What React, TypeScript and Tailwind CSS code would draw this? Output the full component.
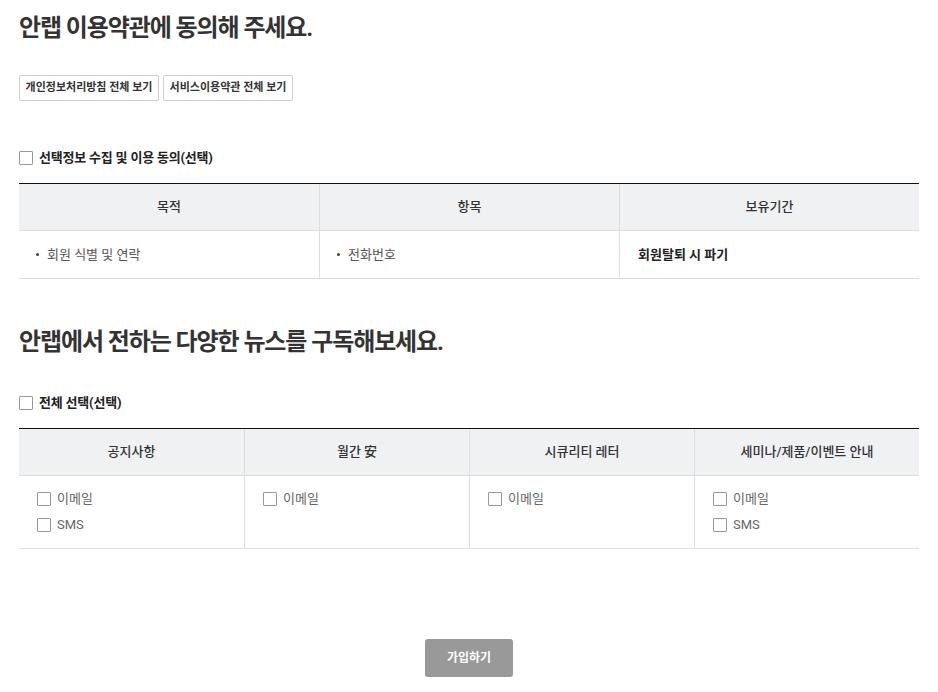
import React from "react";

const font = { fontFamily: 'Roboto, "Noto Sans CJK KR", "Noto Sans", sans-serif' };

function Box() {
  return <span className="inline-block w-[14px] h-[14px] border border-[#999] bg-white rounded-[1px] shrink-0" />;
}

function Check({ label, bold }: { label: string; bold?: boolean }) {
  return (
    <label className="flex items-center gap-[6px] leading-[16px]">
      <Box />
      <span className={bold ? "text-[13px] font-bold text-[#222] tracking-[-0.2px]" : "text-[13px] text-[#666]"}>{label}</span>
    </label>
  );
}

const subs = [
  { title: "공지사항", items: ["이메일", "SMS"] },
  { title: "월간 安", items: ["이메일"] },
  { title: "시큐리티 레터", items: ["이메일"] },
  { title: "세미나/제품/이벤트 안내", items: ["이메일", "SMS"] },
];

export default function App() {
  return (
    <div className="w-[938px] h-[692px] bg-white px-[19px] pt-[12px] text-[#222]" style={font}>
      <h1 className="text-[24px] font-bold text-[#333] leading-[32px] tracking-[-1.1px]">안랩 이용약관에 동의해 주세요.</h1>

      <div className="flex gap-[4px] mt-[31px]">
        <button className="h-[26px] w-[140px] border border-[#ccc] rounded-[2px] text-[11px] font-bold text-[#333]">개인정보처리방침 전체 보기</button>
        <button className="h-[26px] w-[130px] border border-[#ccc] rounded-[2px] text-[11px] font-bold text-[#333]">서비스이용약관 전체 보기</button>
      </div>

      <div className="mt-[49px]">
        <Check label="선택정보 수집 및 이용 동의(선택)" bold />
      </div>

      <div className="mt-[17px] border-t border-[#111] border-b border-b-[#ddd]">
        <div className="grid grid-cols-3 bg-[#f0f1f3] border-b border-[#ddd] h-[47px] text-[13px] font-medium text-[#333]">
          <div className="flex items-center justify-center">목적</div>
          <div className="flex items-center justify-center border-l border-[#ddd]">항목</div>
          <div className="flex items-center justify-center border-l border-[#ddd]">보유기간</div>
        </div>
        <div className="grid grid-cols-3 h-[47px] text-[13px]">
          <div className="flex items-center pl-[17px] gap-[8px] text-[#555]">
            <span className="w-[3px] h-[3px] rounded-full bg-[#444]" />회원 식별 및 연락
          </div>
          <div className="flex items-center pl-[17px] gap-[8px] text-[#555] border-l border-[#ddd]">
            <span className="w-[3px] h-[3px] rounded-full bg-[#444]" />전화번호
          </div>
          <div className="flex items-center pl-[18px] font-bold text-[#222] border-l border-[#ddd]">회원탈퇴 시 파기</div>
        </div>
      </div>

      <h2 className="mt-[47px] text-[24px] font-bold text-[#333] leading-[32px] tracking-[-1.1px]">안랩에서 전하는 다양한 뉴스를 구독해보세요.</h2>

      <div className="mt-[37px]">
        <Check label="전체 선택(선택)" bold />
      </div>

      <div className="mt-[17px] border-t border-[#111] border-b border-b-[#ddd]">
        <div className="grid grid-cols-4 bg-[#f0f1f3] border-b border-[#ddd] h-[47px] text-[13px] font-medium text-[#333]">
          {subs.map((s, i) => (
            <div key={s.title} className={`flex items-center justify-center ${i > 0 ? "border-l border-[#ddd]" : ""}`}>{s.title}</div>
          ))}
        </div>
        <div className="grid grid-cols-4 h-[72px]">
          {subs.map((s, i) => (
            <div key={s.title} className={`flex flex-col gap-[10px] pt-[15px] pl-[18px] ${i > 0 ? "border-l border-[#ddd]" : ""}`}>
              {s.items.map((it) => (
                <Check key={it} label={it} />
              ))}
            </div>
          ))}
        </div>
      </div>

      <div className="flex justify-center mt-[90px]">
        <button className="w-[88px] h-[38px] bg-[#999] rounded-[3px] text-white text-[12px] font-bold">가입하기</button>
      </div>
    </div>
  );
}
